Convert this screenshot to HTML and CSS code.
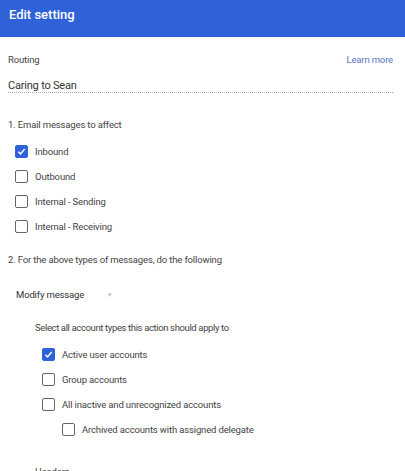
FILE: index.html
```html
<!DOCTYPE html>
<html>
<head>
    <title>Edit setting</title>
    <link rel="stylesheet" href="styles.css">
</head>
<body>
    <!-- top bar -->
    <div class="topbar">Edit setting</div>

    <div class="content">
        <div class="routing-row">
            <span class="field-label">Routing</span>
            <a class="learn-more" href="#">Learn more</a>
        </div>
        <div class="name-field">Caring to Sean</div>

        <!-- section 1 -->
        <div class="section-title first">1. Email messages to affect</div>
        <div class="check-list level-1">
            <label class="check-row"><span class="box checked"><svg viewBox="0 0 14 14" width="13" height="13"><path d="M3 7.2 L5.8 10 L11 3.8" fill="none" stroke="#fff" stroke-width="1.8"/></svg></span>Inbound</label>
            <label class="check-row"><span class="box"></span>Outbound</label>
            <label class="check-row"><span class="box"></span>Internal - Sending</label>
            <label class="check-row"><span class="box"></span>Internal - Receiving</label>
        </div>

        <!-- section 2 -->
        <div class="section-title second">2. For the above types of messages, do the following</div>
        <div class="action-select">Modify message <span class="caret">&#9662;</span></div>

        <div class="sub-block">
            <div class="sub-title">Select all account types this action should apply to</div>
            <div class="check-list">
                <label class="check-row"><span class="box checked"><svg viewBox="0 0 14 14" width="13" height="13"><path d="M3 7.2 L5.8 10 L11 3.8" fill="none" stroke="#fff" stroke-width="1.8"/></svg></span>Active user accounts</label>
                <label class="check-row"><span class="box"></span>Group accounts</label>
                <label class="check-row"><span class="box"></span>All inactive and unrecognized accounts</label>
                <label class="check-row nested"><span class="box"></span>Archived accounts with assigned delegate</label>
            </div>
            <div class="sub-title headers">Headers</div>
        </div>
    </div>
</body>
</html>
```

FILE: styles.css
```css
body {
    margin: 0;
    background: #fff;
    font-family: Roboto, "Liberation Sans", Arial, sans-serif;
    color: #333;
    overflow: hidden;
}

/* top bar */
.topbar {
    height: 37px;
    background: #2f62d9;
    color: #fff;
    font-size: 13px;
    font-weight: 500;
    line-height: 30px;
    padding-left: 9px;
    box-sizing: border-box;
}

.content {
    padding: 0 12px 0 8px;
}

/* routing name */
.routing-row {
    display: flex;
    justify-content: space-between;
    align-items: center;
    margin-top: 16px;
    height: 12px;
    font-size: 9.5px;
    letter-spacing: -0.15px;
}

.field-label {
    color: #444;
}

.learn-more {
    color: #5a78c8;
    text-decoration: none;
}

.name-field {
    font-size: 11px;
    letter-spacing: -0.2px;
    color: #333;
    margin-top: 14px;
    height: 13px;
    line-height: 14px;
    border-bottom: 1px dotted #aaa;
}

/* sections */
.section-title {
    font-size: 9.5px;
    letter-spacing: -0.15px;
    color: #444;
    height: 12px;
    line-height: 12px;
}

.section-title.first {
    margin-top: 26px;
}

.section-title.second {
    margin-top: 15px;
}

.check-list {
    display: flex;
    flex-direction: column;
    margin-top: 8px;
}

.level-1 {
    padding-left: 7px;
}

.check-row {
    display: flex;
    align-items: center;
    gap: 7px;
    height: 25px;
    font-size: 9.5px;
    letter-spacing: -0.15px;
    color: #444;
}

.check-row.nested {
    padding-left: 20px;
}

.box {
    width: 13px;
    height: 13px;
    box-sizing: border-box;
    border: 1.5px solid #666;
    border-radius: 2px;
    flex: none;
    display: flex;
    align-items: center;
    justify-content: center;
}

.box.checked {
    background: #2f62d9;
    border-color: #2f62d9;
}

.box svg {
    display: block;
}

.action-select {
    font-size: 9.5px;
    letter-spacing: -0.15px;
    color: #333;
    margin-top: 23px;
    padding-left: 8px;
    height: 12px;
    line-height: 12px;
}

.caret {
    color: #bbb;
    font-size: 7px;
    margin-left: 22px;
    vertical-align: top;
}

.sub-block {
    padding-left: 27px;
}

.sub-title {
    font-size: 9.5px;
    letter-spacing: -0.37px;
    color: #444;
    margin-top: 21px;
    height: 12px;
    line-height: 12px;
}

.sub-block .check-list {
    margin-top: 8px;
    padding-left: 7px;
}

.sub-title.headers {
    margin-top: 24px;
    letter-spacing: -0.15px;
}
```
